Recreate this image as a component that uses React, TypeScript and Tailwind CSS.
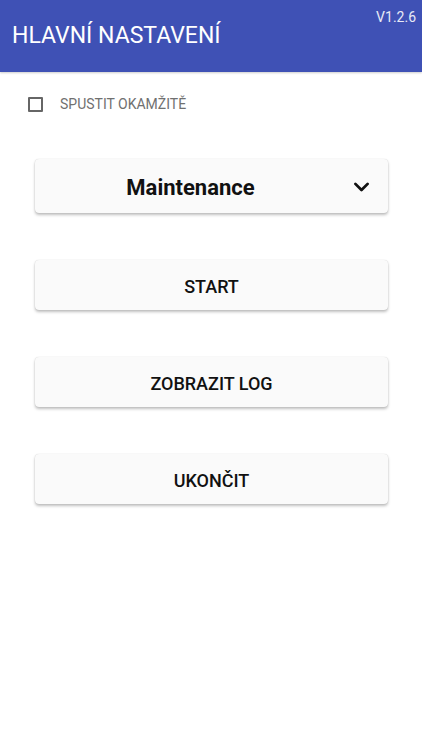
import { useState } from "react";

function ActionButton({ label }: { label: string }) {
  return (
    <button
      type="button"
      className="flex h-[50px] w-full items-center justify-center rounded-[4px] bg-[#fafafa] pt-[2px] text-[18px] font-medium text-[#111] shadow-[0_2px_3px_rgba(0,0,0,0.25),0_0_1px_rgba(0,0,0,0.2)]"
    >
      {label}
    </button>
  );
}

export default function App() {
  const [checked, setChecked] = useState(false);

  return (
    <div className="min-h-[750px] w-full bg-white font-['Roboto',sans-serif]">
      <header className="relative h-[72px] bg-[#3f51b5] shadow-[0_1px_2px_rgba(0,0,0,0.2)]">
        <h1 className="pl-[12px] pt-[22px] text-[23px] font-normal leading-[28px] text-white">
          HLAVNÍ NASTAVENÍ
        </h1>
        <span className="absolute right-[6px] top-[7px] text-[14px] text-[#e8eaf6]">
          V1.2.6
        </span>
      </header>

      <label className="mt-[22px] flex items-center pl-[28px]">
        <span
          onClick={() => setChecked(!checked)}
          className="h-[15px] w-[15px] rounded-[1px] border-2 border-[#666]"
        />
        <span className="ml-[17px] text-[14px] text-[#707070]">SPUSTIT OKAMŽITĚ</span>
      </label>

      <div className="ml-[35px] mr-[34px] mt-[44px] flex flex-col gap-[47px]">
        <button
          type="button"
          className="relative flex h-[54px] w-full items-center justify-center rounded-[4px] bg-[#fafafa] pt-[3px] text-[22px] font-bold text-[#111] shadow-[0_2px_3px_rgba(0,0,0,0.25),0_0_1px_rgba(0,0,0,0.2)]"
        >
          <span className="-ml-[42px]">Maintenance</span>
          <svg
            className="absolute right-[16px] top-[17px]"
            width="21"
            height="21"
            viewBox="0 0 24 24"
            fill="none"
            stroke="#111"
            strokeWidth="3.2"
            strokeLinecap="round"
            strokeLinejoin="round"
          >
            <path d="M5 9l7 7 7-7" />
          </svg>
        </button>
        <ActionButton label="START" />
        <ActionButton label="ZOBRAZIT LOG" />
        <ActionButton label="UKONČIT" />
      </div>
    </div>
  );
}
